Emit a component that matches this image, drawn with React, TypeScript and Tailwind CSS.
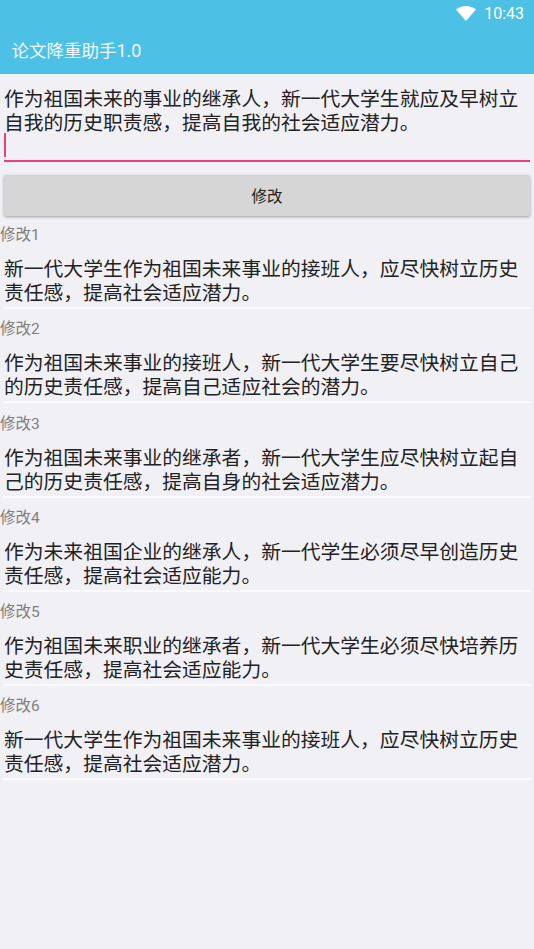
const font = "font-['Roboto','Noto_Sans_CJK_SC',sans-serif]";

const results = [
  "新一代大学生作为祖国未来事业的接班人，应尽快树立历史责任感，提高社会适应潜力。",
  "作为祖国未来事业的接班人，新一代大学生要尽快树立自己的历史责任感，提高自己适应社会的潜力。",
  "作为祖国未来事业的继承者，新一代大学生应尽快树立起自己的历史责任感，提高自身的社会适应潜力。",
  "作为未来祖国企业的继承人，新一代学生必须尽早创造历史责任感，提高社会适应能力。",
  "作为祖国未来职业的继承者，新一代大学生必须尽快培养历史责任感，提高社会适应能力。",
  "新一代大学生作为祖国未来事业的接班人，应尽快树立历史责任感，提高社会适应潜力。",
];

function Result({ index, text }: { index: number; text: string }) {
  return (
    <div className="h-[94.3px]">
      <div className="h-[22px] text-[15.5px] leading-[22px] text-[#808080]">修改{index}</div>
      <div className="mx-[3px] h-[63px] border-b-2 border-[#fafafc] pl-px pt-[12px] pr-[8px] text-[19.8px] leading-[24px] text-[#222]">
        {text}
      </div>
    </div>
  );
}

export default function App() {
  return (
    <div className={`${font} h-[949px] w-[534px] overflow-hidden bg-[#f0f0f5]`}>
      <div className="h-[74px] bg-[#4dc0e6] text-white">
        <div className="flex h-[28px] items-center justify-end pr-[10px]">
          <svg width="20" height="15" viewBox="0 0 20 15" className="mr-[8px] mb-[1px]">
            <path d="M0 3.6C2.8 1.3 6.2 0 10 0s7.2 1.3 10 3.6L10 15z" fill="#fff" />
          </svg>
          <span className="text-[16px] leading-none">10:43</span>
        </div>
        <div className="pl-[11.5px] pt-[12px] text-[17.5px] leading-[22px] text-[#eefaff]">
          论文降重助手<span className="text-[18px]">1.0</span>
        </div>
      </div>

      <div className="mx-[4px] mt-[14px] h-[74px] border-b-2 border-[#ec407a] text-[19.8px] leading-[24px] text-[#222]">
        <div>作为祖国未来的事业的继承人，新一代大学生就应及早树立自我的历史职责感，提高自我的社会适应潜力。</div>
        <div className="mt-[-3px] h-[24px] w-[2px] bg-[#ec407a]" />
      </div>

      <button className="mx-[4px] mt-[13px] flex h-[41px] w-[526px] items-center justify-center rounded-[2px] bg-[#d6d6d6] pt-[5px] text-[15.5px] text-[#222] shadow-[0_1px_3px_rgba(0,0,0,0.35)]">
        修改
      </button>

      <div className="mt-[8px]">
        {results.map((text, i) => (
          <Result key={i} index={i + 1} text={text} />
        ))}
      </div>
    </div>
  );
}
